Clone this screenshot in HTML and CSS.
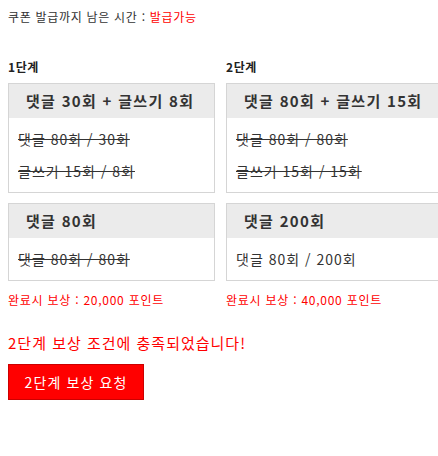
FILE: index.html
```html
<!DOCTYPE html>
<html lang="ko">
<head>
<meta charset="utf-8">
<link rel="stylesheet" href="styles.css">
</head>
<body>
<div class="page">
  <p class="timer">쿠폰 발급까지 남은 시간 : <span class="red">발급가능</span></p>
  <div class="stages">
    <div class="stage stage-1">
      <div class="label">1단계</div>
      <div class="box">
        <div class="box-head">댓글 30회 + 글쓰기 8회</div>
        <div class="box-body">
          <div class="row done">댓글 80회 / 30회</div>
          <div class="row done">글쓰기 15회 / 8회</div>
        </div>
      </div>
      <div class="box">
        <div class="box-head">댓글 80회</div>
        <div class="box-body">
          <div class="row done">댓글 80회 / 80회</div>
        </div>
      </div>
      <div class="reward">완료시 보상 : 20,000 포인트</div>
    </div>
    <div class="stage stage-2">
      <div class="label">2단계</div>
      <div class="box">
        <div class="box-head">댓글 80회 + 글쓰기 15회</div>
        <div class="box-body">
          <div class="row done">댓글 80회 / 80회</div>
          <div class="row done">글쓰기 15회 / 15회</div>
        </div>
      </div>
      <div class="box">
        <div class="box-head">댓글 200회</div>
        <div class="box-body">
          <div class="row">댓글 80회 / 200회</div>
        </div>
      </div>
      <div class="reward">완료시 보상 : 40,000 포인트</div>
    </div>
  </div>
  <p class="message">2단계 보상 조건에 충족되었습니다!</p>
  <button class="request" type="button">2단계 보상 요청</button>
</div>
</body>
</html>
```

FILE: styles.css
```css
html, body {
  margin: 0;
  padding: 0;
  overflow: hidden;
  background: #fff;
}
body {
  font-family: "Noto Sans CJK KR", "DejaVu Sans", sans-serif;
  color: #333;
}
.page {
  padding: 8px;
  width: 422px;
}
.timer {
  margin: 0;
  font-size: 12px;
  line-height: 18px;
  letter-spacing: 0.7px;
}
.red {
  color: #f00;
}
.stages {
  display: flex;
  gap: 11px;
  margin-top: 33px;
  width: 430px;
  overflow: hidden;
}
.stage {
  display: flex;
  flex-direction: column;
  gap: 10px;
  flex-shrink: 0;
}
.stage-1 {
  width: 207px;
}
.stage-2 {
  width: 225px;
}
.label {
  font-size: 12px;
  font-weight: bold;
  line-height: 16px;
  letter-spacing: 0.6px;
  color: #222;
  margin-bottom: -2px;
}
.box {
  border: 1px solid #d5d5d5;
}
.box-head {
  background: #ebebeb;
  height: 34px;
  line-height: 34px;
  padding-left: 17px;
  font-size: 15px;
  font-weight: bold;
  letter-spacing: 1.3px;
  color: #333;
  white-space: nowrap;
}
.box-body {
  padding: 5px 9px;
}
.row {
  font-size: 14px;
  line-height: 32px;
  letter-spacing: 1px;
  color: #333;
  white-space: nowrap;
}
.done {
  text-decoration: line-through;
}
.reward {
  margin-top: 1px;
  font-size: 12px;
  line-height: 16px;
  letter-spacing: 0.75px;
  color: #f00;
}
.message {
  margin: 25px 0 0;
  font-size: 15px;
  line-height: 20px;
  letter-spacing: 1px;
  color: #f00;
}
.request {
  margin-top: 11px;
  width: 136px;
  height: 36px;
  background: #f00;
  border: 1px solid #c00;
  color: #fff;
  font-family: "Noto Sans CJK KR", "DejaVu Sans", sans-serif;
  font-size: 14px;
  letter-spacing: 1.1px;
  padding: 0;
  cursor: pointer;
}
```
